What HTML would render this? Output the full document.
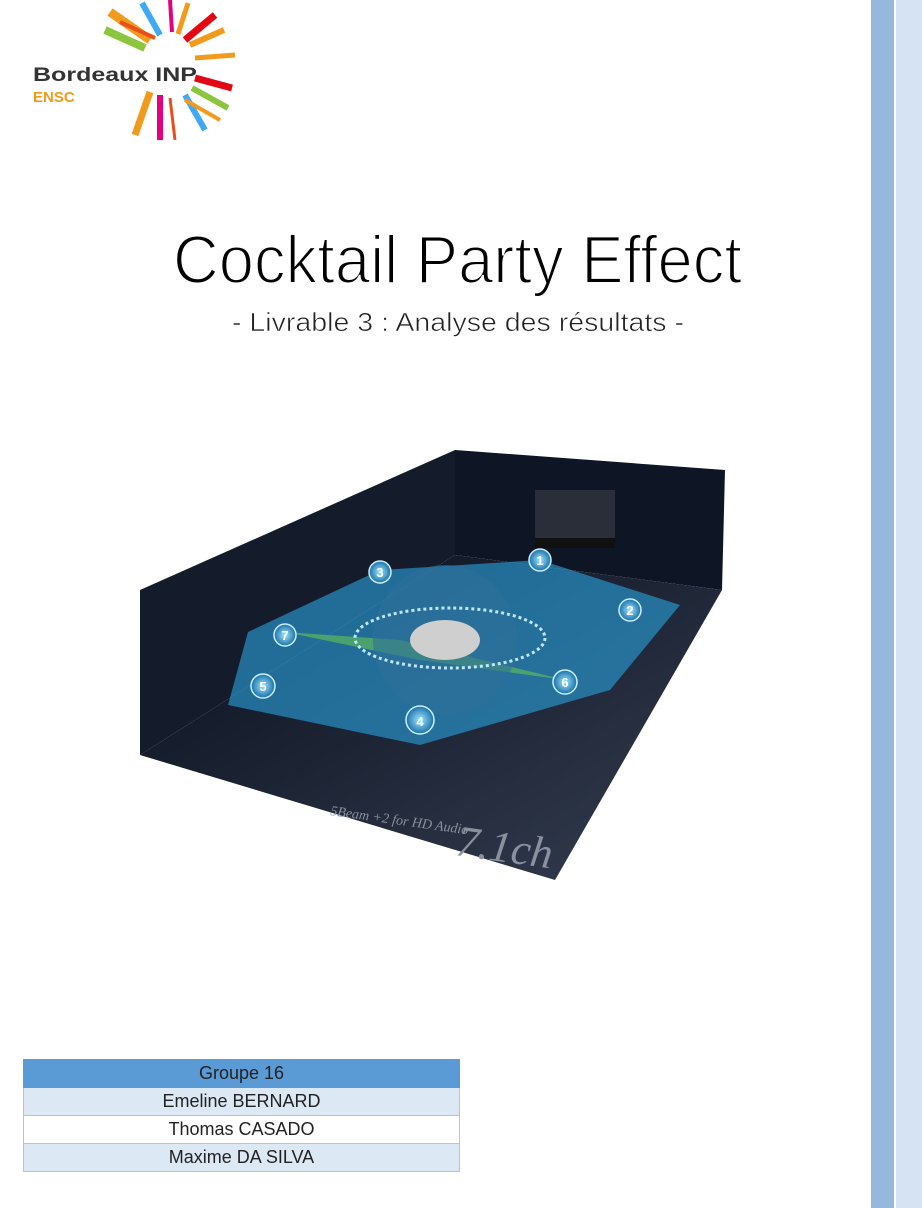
<!DOCTYPE html>
<html><head><meta charset="utf-8"><style>
html,body{margin:0;padding:0;background:#fff;}
body{width:922px;height:1208px;position:relative;overflow:hidden;font-family:"Liberation Sans",sans-serif;}
.bar1{position:absolute;left:871px;top:0;width:23px;height:1208px;background:#95b8dc;}
.bar2{position:absolute;left:896px;top:0;width:26px;height:1208px;background:#d5e3f3;}
svg{position:absolute;left:0;top:0;}
table{position:absolute;left:23px;top:1059px;width:437px;border-collapse:collapse;font-size:18px;color:#222;}
td{height:27px;padding:0;text-align:center;border:1px solid #a9c8e8;line-height:27px;}
tr.h td{background:#5b9bd5;border-color:#5b9bd5;}
tr.l td{background:#dde8f5;}
tr.w td{background:#fff;}
</style></head><body>
<div class="bar1"></div><div class="bar2"></div>
<svg width="922" height="1208" viewBox="0 0 922 1208">
 <g stroke-linecap="butt">
  <line x1="150" y1="40" x2="110" y2="12" stroke="#f29a1c" stroke-width="9"/>
  <line x1="155" y1="38" x2="120" y2="22" stroke="#e94e1b" stroke-width="4"/>
  <line x1="145" y1="48" x2="105" y2="30" stroke="#8cc63f" stroke-width="8"/>
  <line x1="160" y1="35" x2="142" y2="3" stroke="#3fa9f5" stroke-width="6"/>
  <line x1="172" y1="32" x2="170" y2="0" stroke="#e5007e" stroke-width="4"/>
  <line x1="178" y1="34" x2="188" y2="3" stroke="#f29a1c" stroke-width="5"/>
  <line x1="185" y1="40" x2="215" y2="15" stroke="#e30613" stroke-width="7"/>
  <line x1="190" y1="45" x2="224" y2="30" stroke="#f29a1c" stroke-width="6"/>
  <line x1="195" y1="58" x2="235" y2="55" stroke="#f29a1c" stroke-width="5"/>
  <line x1="195" y1="78" x2="232" y2="88" stroke="#e30613" stroke-width="7"/>
  <line x1="192" y1="88" x2="228" y2="108" stroke="#8cc63f" stroke-width="6"/>
  <line x1="185" y1="95" x2="205" y2="130" stroke="#3fa9f5" stroke-width="6"/>
  <line x1="170" y1="98" x2="175" y2="140" stroke="#e94e1b" stroke-width="3"/>
  <line x1="160" y1="95" x2="160" y2="140" stroke="#e5007e" stroke-width="6"/>
  <line x1="150" y1="92" x2="135" y2="135" stroke="#f29a1c" stroke-width="7"/>
  <line x1="185" y1="100" x2="220" y2="120" stroke="#f29a1c" stroke-width="4"/>
 </g>
 <text x="33" y="81" font-family="Liberation Sans" font-weight="bold" font-size="19" fill="#333" textLength="164" lengthAdjust="spacingAndGlyphs">Bordeaux INP</text>
 <text x="33" y="102" font-family="Liberation Sans" font-weight="bold" font-size="15" fill="#f29a1c">ENSC</text>
 <text x="173" y="283" font-family="Liberation Sans" font-size="68" fill="#000" stroke="#fff" stroke-width="2" textLength="569" lengthAdjust="spacingAndGlyphs">Cocktail Party Effect</text>
 <text x="232" y="331" font-family="Liberation Sans" font-size="26" fill="#222" stroke="#fff" stroke-width="0.6" textLength="452" lengthAdjust="spacingAndGlyphs">- Livrable 3 : Analyse des résultats -</text>
 <defs>
  <linearGradient id="fl" x1="0" y1="0" x2="1" y2="1"><stop offset="0" stop-color="#080e1c"/><stop offset="1" stop-color="#343d50"/></linearGradient>
  <radialGradient id="gl"><stop offset="0" stop-color="#9fe8ff"/><stop offset="1" stop-color="#1a6fa8"/></radialGradient>
 </defs>
 <polygon points="140,590 455,450 455,555 140,755" fill="#141c2c"/>
 <polygon points="455,450 725,470 722,590 455,555" fill="#0e1626"/>
 <polygon points="140,755 455,555 722,590 555,880" fill="url(#fl)"/>
 <rect x="535" y="490" width="80" height="50" fill="#2a2e38"/>
 <rect x="535" y="538" width="80" height="10" fill="#101010"/>
 <polygon points="380,570 540,560 680,605 610,690 420,745 228,705 248,632" fill="#2aa3e0" opacity="0.6"/>
 <polygon points="285,632 400,640 565,680 420,660" fill="#5cb85c" opacity="0.7"/>
 <ellipse cx="445" cy="640" rx="72" ry="75" fill="#2f6f9a" opacity="0.6"/>
 <ellipse cx="450" cy="638" rx="95" ry="30" fill="none" stroke="#bfe6ff" stroke-width="3" stroke-dasharray="3,3"/>
 <ellipse cx="445" cy="640" rx="35" ry="20" fill="#cfcfcf"/>
 <g fill="url(#gl)" stroke="#c8f0ff" stroke-width="1.5">
  <circle cx="540" cy="560" r="11"/><circle cx="630" cy="610" r="11"/><circle cx="380" cy="572" r="11"/>
  <circle cx="285" cy="635" r="11"/><circle cx="263" cy="686" r="12"/><circle cx="565" cy="682" r="12"/><circle cx="420" cy="720" r="14"/>
 </g>
 <g font-family="Liberation Sans" font-weight="bold" font-size="13" fill="#fff" text-anchor="middle">
  <text x="540" y="565">1</text><text x="630" y="615">2</text><text x="380" y="577">3</text><text x="285" y="640">7</text>
  <text x="263" y="691">5</text><text x="565" y="687">6</text><text x="420" y="726">4</text>
 </g>
 <text x="455" y="855" font-family="Liberation Serif" font-style="italic" font-size="44" fill="#8a909c" transform="rotate(8 455 855)">7.1ch</text>
 <text x="330" y="815" font-family="Liberation Serif" font-style="italic" font-size="14" fill="#8a909c" transform="rotate(8 330 815)">5Beam +2 for HD Audio</text>
</svg>
<table>
<tr class="h"><td>Groupe 16</td></tr>
<tr class="l"><td>Emeline BERNARD</td></tr>
<tr class="w"><td>Thomas CASADO</td></tr>
<tr class="l"><td>Maxime DA SILVA</td></tr>
</table>
</body></html>
